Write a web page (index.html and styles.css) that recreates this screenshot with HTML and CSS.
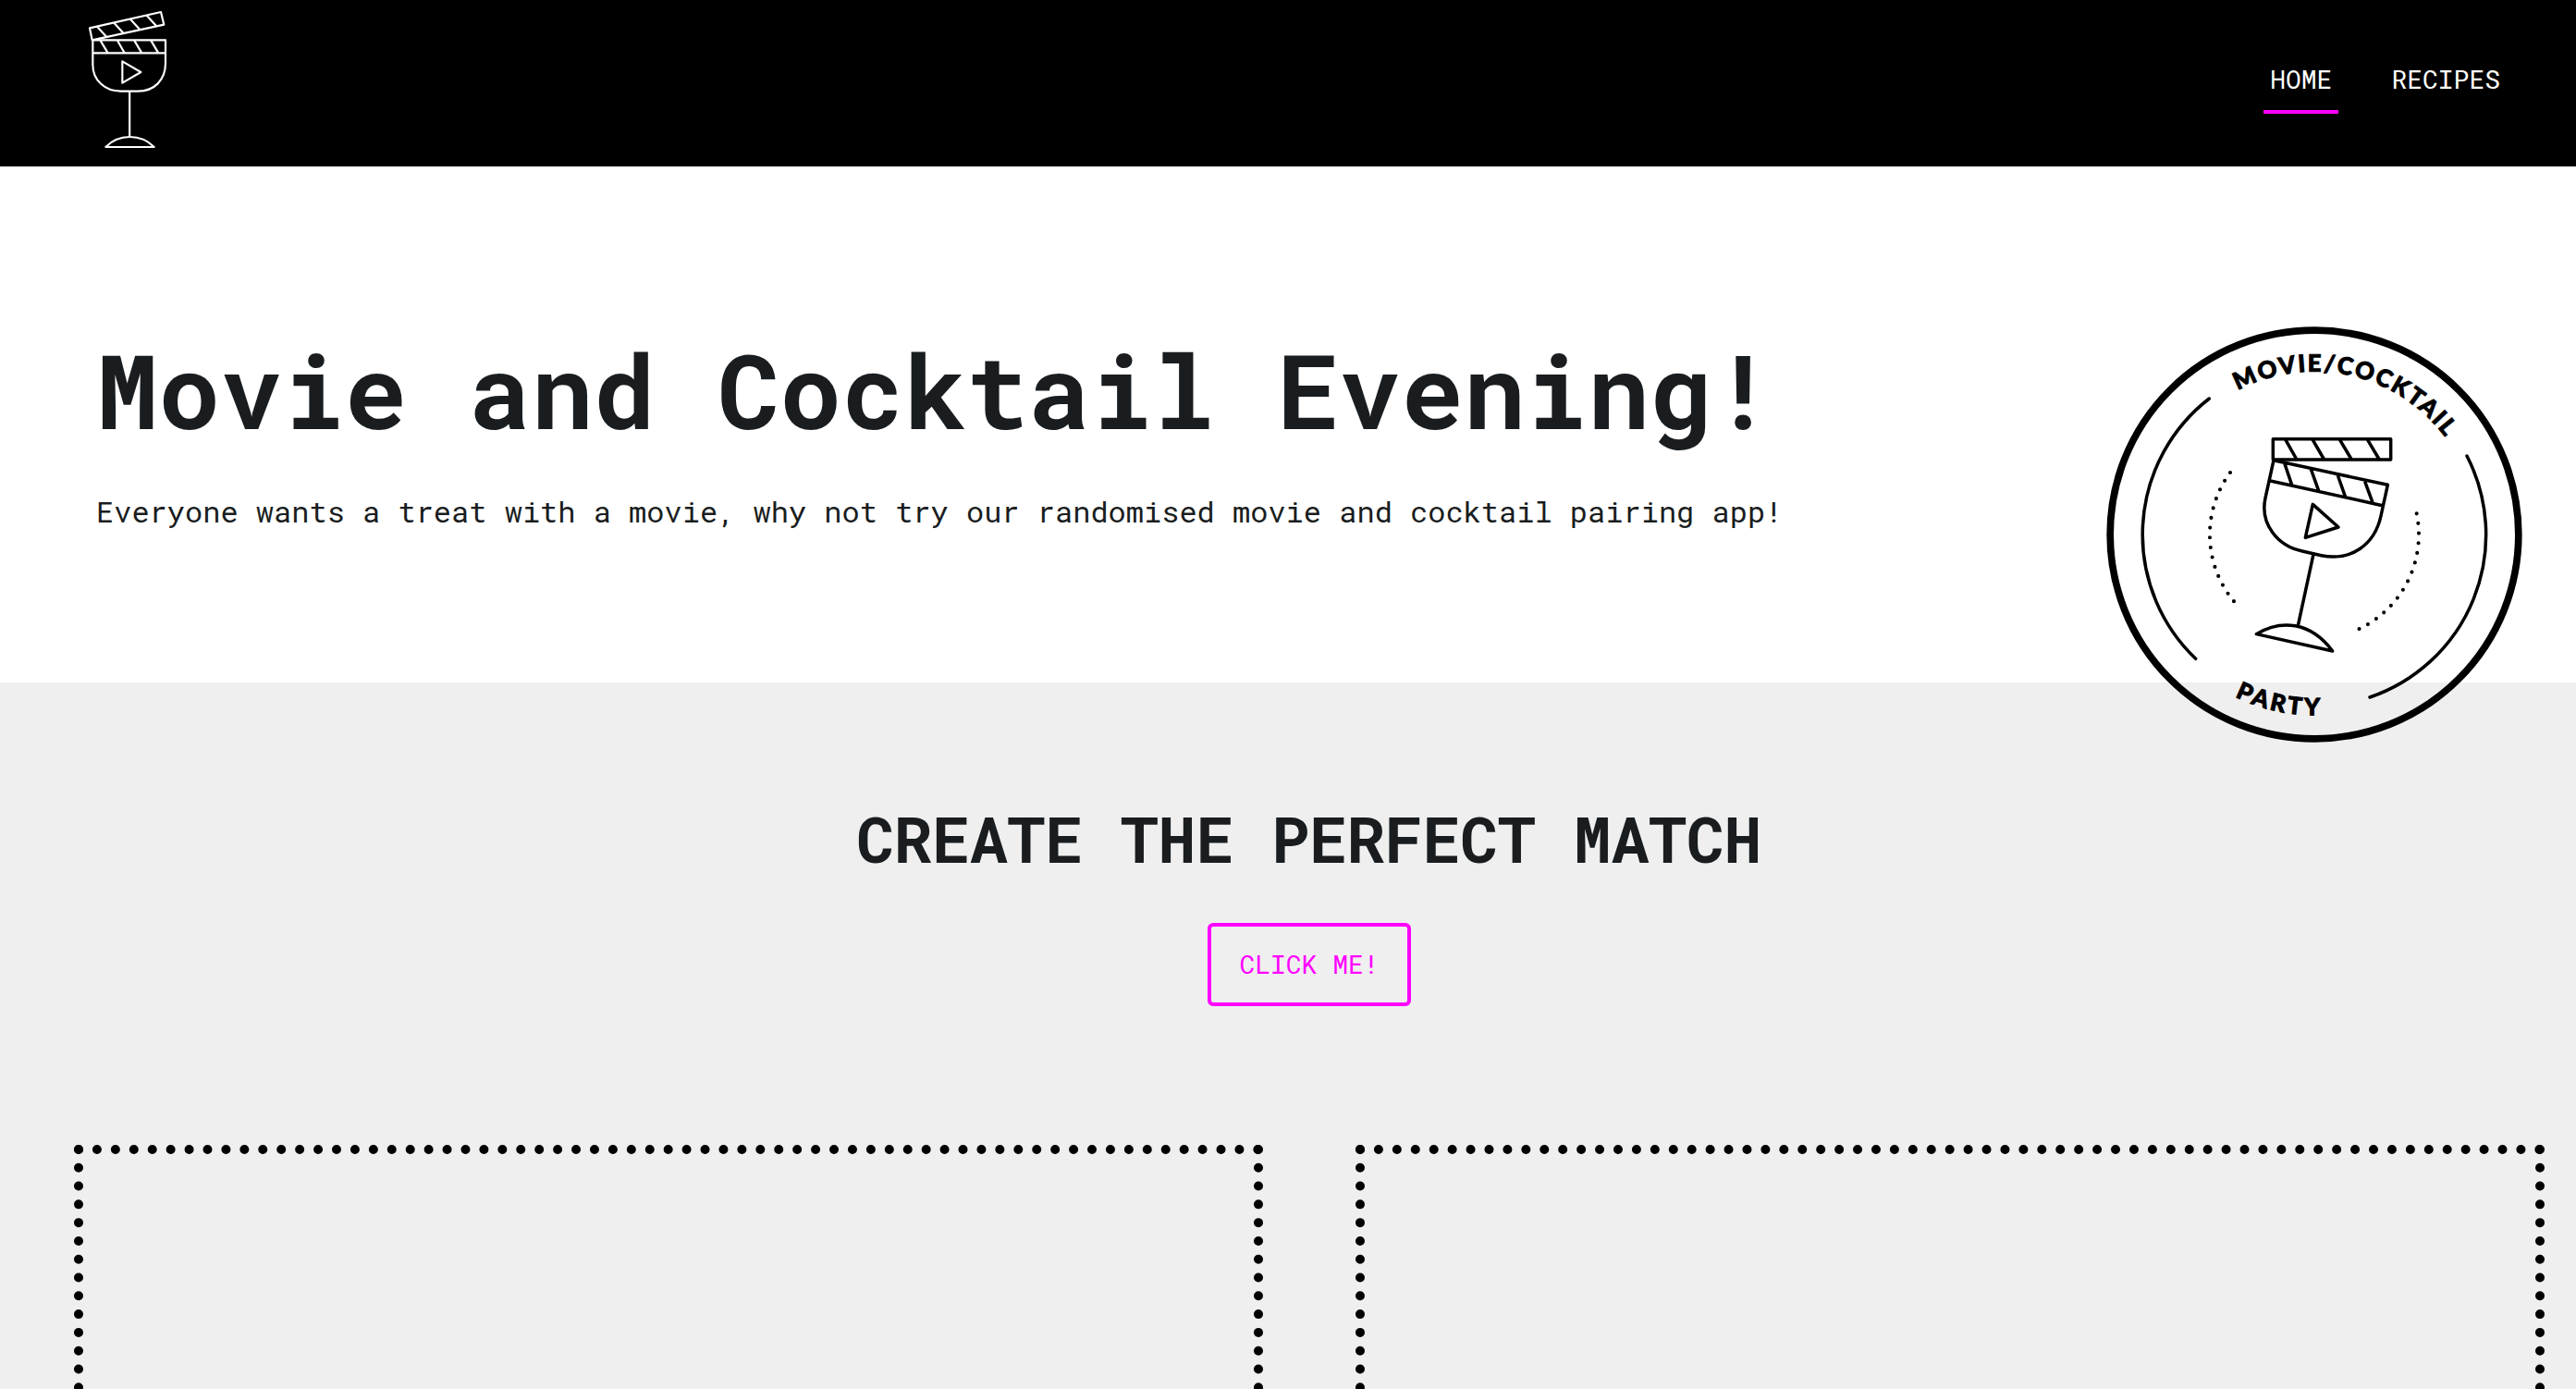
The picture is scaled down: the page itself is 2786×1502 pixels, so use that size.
FILE: index.html
```html
<!DOCTYPE html>
<html lang="en">
<head>
<meta charset="utf-8">
<title>Movie and Cocktail Evening</title>
<link rel="stylesheet" href="styles.css">
</head>
<body>
<div class="page">
  <header class="header">
    <a class="logo" href="#" aria-label="Home">
      <svg viewBox="0 0 480 540" width="160" height="180">
        <path d="M111 91 342 39 352 80 119 130ZM135 86 166 120M190 74 220 107M243 62 274 96M296 50 327 84"/>
        <path d="M121 130H357V205C357 260 320 296 268 296H212C160 296 121 260 121 210ZM121 172H357M145 130 170 172M200 130 224 172M255 130 280 172M309 130 334 172"/>
        <path d="M217 199 277 234 217 269ZM240.500 296V444M163 477C205 433 277 433 320 477Z"/>
      </svg>
    </a>
    <nav class="nav">
      <a class="nav-link active" href="#">HOME</a>
      <a class="nav-link" href="#">RECIPES</a>
    </nav>
  </header>

  <section class="hero">
    <h1 class="hero-title">Movie and Cocktail Evening!</h1>
    <p class="hero-text">Everyone wants a treat with a movie, why not try our randomised movie and cocktail pairing app!</p>
    <svg class="badge" viewBox="0 0 1470 1440" width="490" height="480">
      <defs>
        <path id="arc-top" d="M480.500 247.200A529 529 0 0 1 1187.100 449.500"/>
        <path id="arc-bottom" d="M471.500 1240.400A586 586 0 0 0 830.800 1291.100"/>
      </defs>
      <circle class="ring" cx="729" cy="714" r="662.500"/>
      <path class="arc" d="M388 273A557.500 557.500 0 0 0 344 1117M1224 459A557.500 557.500 0 0 1 909 1242"/>
      <path class="dots" pathLength="14" d="M456 513A339 339 0 0 0 469 932"/>
      <path class="dots" pathLength="14" d="M1061 646A339 339 0 0 1 873 1021"/>
      <g class="glass">
        <path d="M595 404H977V471H595ZM634 404 672 471M722 404 761 471M810 404 850 471M900 404 940 471"/>
        <path d="M597 473 967 553 945 654C925 745 850 802 752 782L690 768C610 752 552 680 570 596ZM583 539 950 620M632 482 656 553M718 502 743 572M805 522 830 593M893 542 918 610"/>
        <path d="M724 616 807 690 700 724ZM726 778 676 1010M541 1037C620 990 715 995 788 1092Z"/>
      </g>
      <text class="badge-text"><textPath href="#arc-top" textLength="750">MOVIE/COCKTAIL</textPath></text>
      <text class="badge-text"><textPath href="#arc-bottom" textLength="284">PARTY</textPath></text>
    </svg>
  </section>

  <main class="match">
    <h2 class="match-title">CREATE THE PERFECT MATCH</h2>
    <button class="match-button" type="button">CLICK ME!</button>
    <div class="cards">
      <div class="card"></div>
      <div class="card"></div>
    </div>
  </main>
</div>
</body>
</html>
```
FILE: styles.css
```css
* { box-sizing: border-box; }

body {
  margin: 0;
  font-family: "Roboto Mono", "DejaVu Sans Mono", monospace;
  color: #191d20;
  background: #fff;
}

.page {
  height: 100vh;
  overflow: hidden;
  display: flex;
  flex-direction: column;
}

.header {
  flex: none;
  height: 180px;
  padding: 0 75px 0 60px;
  display: flex;
  justify-content: space-between;
  background: #000;
}

.logo svg {
  display: block;
  fill: none;
  stroke: #fff;
  stroke-width: 6.500;
  stroke-linejoin: round;
}

.nav {
  display: flex;
  align-items: flex-start;
  gap: 50px;
  padding-top: 61px;
}

.nav-link {
  height: 62px;
  padding: 0 7px;
  font-size: 28px;
  font-weight: 450;
  line-height: 49px;
  color: #fff;
  text-decoration: none;
  border-bottom: 4px solid transparent;
}

.nav-link.active { border-bottom-color: #f0f; }

.hero {
  flex: none;
  position: relative;
  height: 558px;
  padding: 173px 104px 0;
}

.hero-title {
  margin: 0;
  font-size: 112px;
  font-weight: 700;
  line-height: 135px;
}

.hero-text {
  margin: 41px 0 0;
  font-size: 32px;
  line-height: 48px;
}

/* The badge overlaps the section below the hero. */
.badge {
  position: absolute;
  top: 160px;
  right: 36px;
  fill: none;
  stroke: #000;
  stroke-width: 10.500;
}

.ring { stroke-width: 23; }
.arc { stroke-linecap: round; }
.dots { stroke-width: 12.500; stroke-linecap: round; stroke-dasharray: 0 0.995; }
.glass { stroke-linejoin: round; }

.badge-text {
  font: 900 77px Lato, sans-serif;
  fill: #000;
  stroke: #000;
  stroke-width: 3;
}

.match {
  flex: 1 0 auto;
  padding: 127px 34px 0 80px;
  display: flex;
  flex-direction: column;
  align-items: center;
  background: #efefef;
}

.match-title {
  margin: 0;
  font-size: 68px;
  font-weight: 700;
  line-height: 83px;
}

.match-button {
  width: 220px;
  height: 90px;
  margin-top: 50px;
  padding: 0 0 1px;
  font: 400 28px/42px "Roboto Mono", "DejaVu Sans Mono", monospace;
  color: #f0f;
  background: transparent;
  border: 4px solid #f0f;
  border-radius: 6px;
}

.cards {
  align-self: stretch;
  margin-top: 150px;
  display: grid;
  grid-template-columns: 1fr 1fr;
  gap: 100px;
}

.card {
  height: 604px;
  border: 10px dotted #000;
}
```
